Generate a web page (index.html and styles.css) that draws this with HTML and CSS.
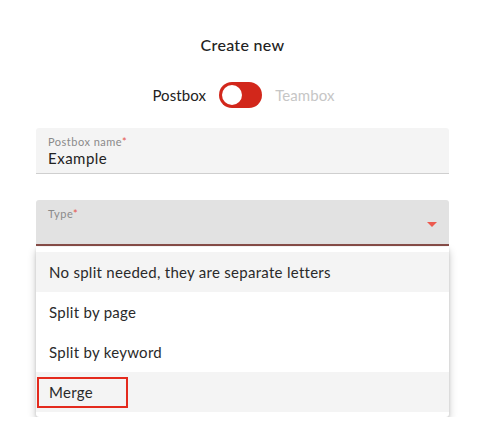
FILE: index.html
```html
<!DOCTYPE html>
<html>
<head>
<meta charset="utf-8">
<link rel="stylesheet" href="styles.css">
</head>
<body>
<div class="page">
  <h1 class="title">Create new</h1>
  <div class="switch-row">
    <span class="opt active">Postbox</span>
    <span class="toggle"><span class="knob"></span></span>
    <span class="opt muted">Teambox</span>
  </div>
  <div class="field name">
    <div class="label">Postbox name<span class="req">*</span></div>
    <div class="value">Example</div>
  </div>
  <div class="field select">
    <div class="label">Type<span class="req">*</span></div>
    <svg class="caret" width="10" height="5" viewBox="0 0 10 5"><path d="M0 0H10L5 5Z" fill="#ec5a4f"/></svg>
  </div>
  <ul class="menu">
    <li class="item hl">No split needed, they are separate letters</li>
    <li class="item">Split by page</li>
    <li class="item">Split by keyword</li>
    <li class="item hl"><span class="mark">Merge</span></li>
  </ul>
</div>
</body>
</html>
```
FILE: styles.css
```css
* { box-sizing: border-box; }
html, body { margin: 0; padding: 0; background: #fff; }
body { font-family: "Lato", "Open Sans", sans-serif; color: #222; }
.page { width: 482px; padding: 0 33px 0 36px; }
.title {
  margin: 0;
  padding-top: 35px;
  height: 72px;
  text-align: center;
  font-size: 16px;
  font-weight: 500;
  letter-spacing: 0.3px;
  color: #222;
  line-height: 20px;
}
.switch-row {
  display: flex;
  align-items: center;
  justify-content: center;
  gap: 13px;
  height: 30px;
  margin-top: 8px;
  margin-left: 2px;
}
.opt { font-size: 15px; letter-spacing: 0.1px; }
.active { color: #222; }
.muted { color: #c6c6c6; }
.toggle {
  width: 43px;
  height: 26px;
  border-radius: 13px;
  background: #d2271b;
  display: flex;
  align-items: center;
  padding-left: 3px;
}
.knob { width: 20px; height: 20px; border-radius: 50%; background: #fff; }
.field {
  height: 46px;
  background: #f4f4f4;
  border-bottom: 1px solid #cfcfcf;
  border-radius: 3px 3px 0 0;
  padding: 7px 12px 0 12px;
}
.name { margin-top: 18px; }
.label { font-size: 11px; color: #8a8a8a; letter-spacing: 0.5px; line-height: 13px; }
.req { color: #e5554c; }
.value { font-size: 15px; color: #222; letter-spacing: 0.5px; line-height: 19px; margin-top: 1px; }
.select {
  margin-top: 26px;
  background: #e2e2e2;
  border-bottom: 2px solid #874d48;
  display: flex;
  justify-content: space-between;
  align-items: flex-start;
}
.caret { margin-top: 15px; }
.menu {
  margin: 1px 0 0;
  padding: 5px 0 5px;
  list-style: none;
  background: #fff;
  box-shadow: 0 4px 8px rgba(0,0,0,0.22), 0 1px 3px rgba(0,0,0,0.12);
  border-radius: 0 0 3px 3px;
}
.item {
  height: 40px;
  display: flex;
  align-items: center;
  padding-left: 13px;
  font-size: 15px;
  letter-spacing: 0.28px;
  color: #2a2a2a;
}
.hl { background: #f4f4f4; }
.mark {
  display: flex;
  align-items: center;
  margin-left: -12px;
  padding-left: 10px;
  width: 91px;
  height: 31px;
  border: 2px solid #e42a1d;
}
```
